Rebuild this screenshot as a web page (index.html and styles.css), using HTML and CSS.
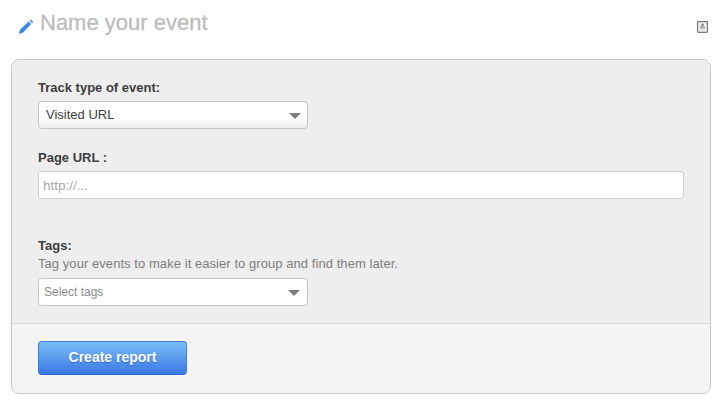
FILE: index.html
```html
<!DOCTYPE html>
<html lang="en">
<head>
<meta charset="utf-8">
<title>Name your event</title>
<link rel="stylesheet" href="styles.css">
</head>
<body>
<header class="head">
  <svg class="pencil" width="16" height="16" viewBox="0 0 16 16"><path d="M11.6 1.6l1.2-1 2.4 2.4-1.1 1.2zM10.7 2.5l2.6 2.6-8.2 8.3-3.6 1.3-.7-.7 1.3-3.6z" fill="#3b8ae6"/></svg>
  <h1 class="title">Name your event</h1>
  <svg class="book" width="11" height="12" viewBox="0 0 11 12"><rect x=".6" y=".6" width="9.8" height="10.8" rx=".8" fill="#f2f2f2" stroke="#7a7a7a" stroke-width="1.2"/><circle cx="5.5" cy="4" r="1.4" fill="#8c8c8c"/><rect x="3" y="5.5" width="5" height="2" fill="#a0a0a0"/><rect x="3" y="8.5" width="5" height="1" fill="#d0d0d0"/></svg>
</header>
<main class="panel">
  <section class="body">
    <label class="label">Track type of event:</label>
    <div class="select"><span>Visited URL</span><i class="caret"></i></div>
    <label class="label url-label">Page URL :</label>
    <input class="input" type="text" placeholder="http://...">
    <label class="label tags-label">Tags:</label>
    <p class="help">Tag your events to make it easier to group and find them later.</p>
    <div class="select tags"><span>Select tags</span><i class="caret"></i></div>
  </section>
  <footer class="foot"><button class="btn" type="button">Create report</button></footer>
</main>
</body>
</html>
```
FILE: styles.css
```css
* { box-sizing: border-box; }
html, body { margin: 0; padding: 0; background: #fff; }
body { width: 723px; height: 407px; overflow: hidden; font-family: "Liberation Sans", Arial, sans-serif; color: #3d3d3d; }
.head { height: 59px; display: flex; align-items: flex-start; padding: 0 15px 0 18px; }
.pencil { margin-top: 19px; flex: none; }
.title { margin: 9px 0 0 6px; font-size: 22px; line-height: 28px; font-weight: 400; color: #bcbcbc; -webkit-text-stroke: .3px #bcbcbc; flex: 1; }
.book { margin-top: 21px; flex: none; }
.panel { margin-left: 11px; width: 700px; height: 335px; border: 1px solid #c9c9c9; border-radius: 8px; overflow: hidden; background: #f4f4f4; display: flex; flex-direction: column; }
.body { background: #eeeeee; height: 264px; padding: 20px 26px 0; border-bottom: 1px solid #d9d9d9; }
.label { display: block; font-size: 13px; line-height: 15px; font-weight: 700; color: #3d3d3d; }
.select { margin-top: 6px; width: 270px; height: 28px; background: linear-gradient(#ffffff 60%, #efefef); border: 1px solid #c6c6c6; border-radius: 4px; display: flex; align-items: center; justify-content: space-between; padding: 0 6px 2px 7px; font-size: 13px; color: #3d3d3d; }
.caret { width: 0; height: 0; border-left: 6px solid transparent; border-right: 6px solid transparent; border-top: 6px solid #7d7d7d; margin-top: 4px; }
.url-label { margin-top: 21px; }
.input { display: block; margin-top: 6px; width: 646px; height: 28px; border: 1px solid #cfcfcf; border-radius: 3px; background: #fff; padding: 0 4px; font: 13.5px "Liberation Sans", Arial, sans-serif; outline: none; }
.input::placeholder { color: #a8a8a8; opacity: 1; }
.tags-label { margin-top: 39px; }
.help { margin: 3px 0 0; font-size: 13px; letter-spacing: .06px; line-height: 16px; color: #7d7d7d; }
.tags { margin-top: 6px; background: #fff; font-size: 12px; color: #8a8a8a; padding: 0 7px 0 5px; }
.tags .caret { margin-top: 2px; }
.foot { flex: 1; padding: 17px 26px 0; }
.btn { display: block; width: 149px; height: 34px; border: 1px solid #3f7fdc; border-bottom-color: #2a62d0; border-radius: 4px; background: linear-gradient(#79bdf6, #3a78e6); color: #fff; font: 700 14px "Liberation Sans", Arial, sans-serif; padding: 0 0 2px; text-shadow: 0 1px 1px rgba(30, 70, 160, .5); }
```
